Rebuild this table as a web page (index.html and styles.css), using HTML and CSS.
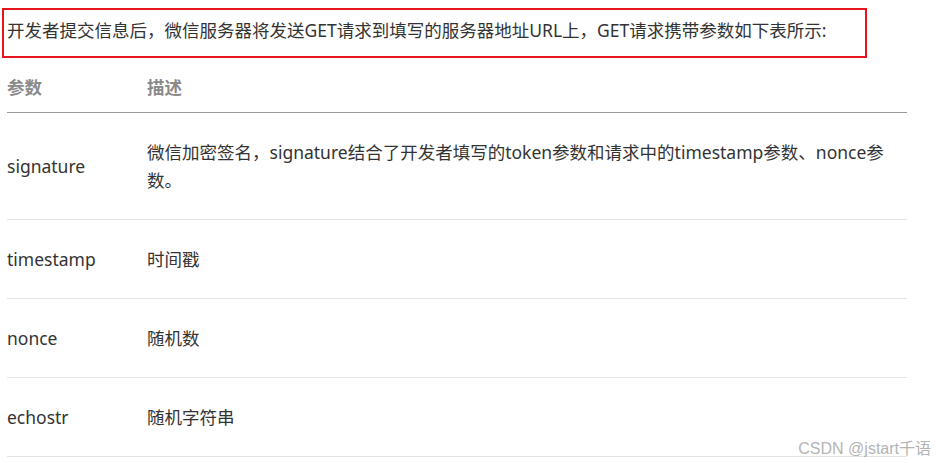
FILE: index.html
```html
<!DOCTYPE html>
<html lang="zh-CN">
<head>
    <meta charset="UTF-8">
    <meta name="viewport" content="width=device-width, initial-scale=1.0">
    <title>GET请求参数</title>
    <link rel="stylesheet" href="styles.css">
</head>
<body>
    <p class="note">开发者提交信息后，微信服务器将发送GET请求到填写的服务器地址URL上，GET请求携带参数如下表所示:</p>

    <table class="params">
        <thead>
            <tr>
                <th class="col-name">参数</th>
                <th>描述</th>
            </tr>
        </thead>
        <tbody>
            <tr>
                <td>signature</td>
                <td>微信加密签名，signature结合了开发者填写的token参数和请求中的timestamp参数、nonce参数。</td>
            </tr>
            <tr>
                <td>timestamp</td>
                <td>时间戳</td>
            </tr>
            <tr>
                <td>nonce</td>
                <td>随机数</td>
            </tr>
            <tr>
                <td>echostr</td>
                <td>随机字符串</td>
            </tr>
        </tbody>
    </table>

    <div class="watermark">CSDN @jstart千语</div>
</body>
</html>
```

FILE: styles.css
```css
body {
    margin: 0;
    padding: 8px 0 0 0;
    font-family: "Noto Sans", "Noto Sans CJK SC", sans-serif;
    font-size: 17.5px;
    color: #333;
    background: #fff;
    position: relative;
    height: 463px;
    overflow: hidden;
    box-sizing: border-box;
}
.note {
    margin: 0 0 0 2px;
    width: 855px;
    border: 2px solid #e8141c;
    padding: 6px 3px 12px 3px;
    line-height: 28px;
    white-space: nowrap;
}
.params {
    margin: 0 0 0 7px;
    width: 900px;
    border-collapse: collapse;
}
.params th {
    text-align: left;
    font-weight: bold;
    color: #8a8a8a;
    line-height: 28px;
    padding: 15px 0 11px 0;
    border-bottom: 1px solid #999;
}
.params .col-name {
    width: 140px;
}
.params td {
    line-height: 28px;
    padding: 25px 20px 25px 0;
    border-bottom: 1px solid #e3e3e3;
    vertical-align: middle;
}
.watermark {
    position: absolute;
    right: 5px;
    bottom: 4px;
    font-family: "Liberation Sans", "Noto Sans CJK SC", sans-serif;
    font-size: 16px;
    color: #b4b4b4;
}
```
